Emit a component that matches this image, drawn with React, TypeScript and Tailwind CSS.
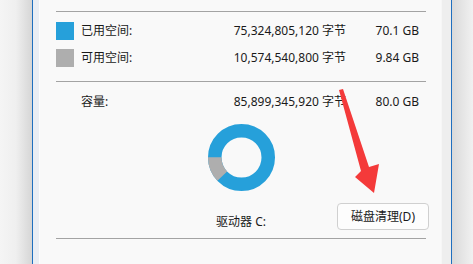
const font = { fontFamily: '"Noto Sans", "Noto Sans CJK SC", sans-serif' };

const rows = [
  { label: "已用空间:", bytes: "75,324,805,120 字节", size: "70.1 GB", color: "bg-[#26a0da]" },
  { label: "可用空间:", bytes: "10,574,540,800 字节", size: "9.84 GB", color: "bg-[#aeaeae]" },
];

function Donut() {
  const r = 26.75;
  const c = 2 * Math.PI * r;
  const free = (9.84 / 80) * c;
  return (
    <svg width="67" height="67" viewBox="0 0 67 67">
      <circle cx="33.5" cy="33.5" r={r} fill="none" stroke="#26a0da" strokeWidth="13.5" />
      <circle
        cx="33.5"
        cy="33.5"
        r={r}
        fill="none"
        stroke="#aeaeae"
        strokeWidth="13.5"
        strokeDasharray={`${free} ${c}`}
        transform="rotate(136 33.5 33.5)"
      />
    </svg>
  );
}

function Row({ label, bytes, size, color }: { label?: string; bytes: string; size: string; color?: string }) {
  return (
    <div className="flex items-center h-[18px] text-[12px] text-[#1a1a1a]">
      <div className={`w-[18px] h-[18px] ${color ?? ""}`} />
      <div className="ml-[7px] w-[120px]">{label}</div>
      <div className="w-[145px] text-right whitespace-nowrap">{bytes}</div>
      <div className="w-[73px] text-right whitespace-nowrap">{size}</div>
    </div>
  );
}

export default function App() {
  return (
    <div className="relative flex w-[473px] h-[264px] overflow-hidden bg-[#f9f9f9]" style={font}>
      {/* left window edge */}
      <div className="w-[32px] h-full bg-gradient-to-r from-[#f5f5f5] via-[#efefef] to-[#d6d6d6]" />
      <div className="w-px h-full bg-[#1f6fbf]" />
      <div className="w-[6px] h-full bg-[#eaeef4]" />
      <div className="w-px h-full bg-[#fdfdfd]" />

      {/* dialog content */}
      <div className="flex flex-col w-[401px] h-full bg-[#f9f9f9] pl-[16px] pr-[15px]">
        <div className="mt-[11px] h-px bg-[#a3a3a3]" />
        <div className="mt-[10px]">
          <Row {...rows[0]} />
        </div>
        <div className="mt-[9px]">
          <Row {...rows[1]} />
        </div>
        <div className="mt-[14px] h-px bg-[#a3a3a3]" />
        <div className="mt-[11px]">
          <Row label="容量:" bytes="85,899,345,920 字节" size="80.0 GB" />
        </div>
        <div className="mt-[13px] flex justify-center">
          <Donut />
        </div>
        <div className="mt-[12px] grid grid-cols-[1fr_auto_1fr] h-[27px]">
          <div />
          <div className="self-end text-[12px] text-[#1a1a1a] leading-[14px] pb-px">驱动器 C:</div>
          <div className="flex justify-end -mr-[3px]">
            <button className="w-[92px] h-[27px] rounded-[4px] border border-[#d0d0d0] bg-[#fdfdfd] text-[12px] text-[#1a1a1a]">
              磁盘清理(D)
            </button>
          </div>
        </div>
        <div className="mt-[8px] h-px bg-[#a3a3a3]" />
      </div>

      {/* right window edge */}
      <div className="w-[10px] h-full bg-[#eeeeee] border-l border-[#f6f6f6]" />
      <div className="w-px h-full bg-[#1f6fbf]" />
      <div className="flex-1 h-full bg-gradient-to-r from-[#d9d9d9] to-[#f1f1f1]" />

      {/* red annotation arrow */}
      <svg className="absolute left-0 top-0 pointer-events-none" width="473" height="264">
        <polygon
          points="339,90 343,89 369,167 379,164 374,193 355,177 361,171"
          fill="#f43a3a"
        />
      </svg>
    </div>
  );
}
